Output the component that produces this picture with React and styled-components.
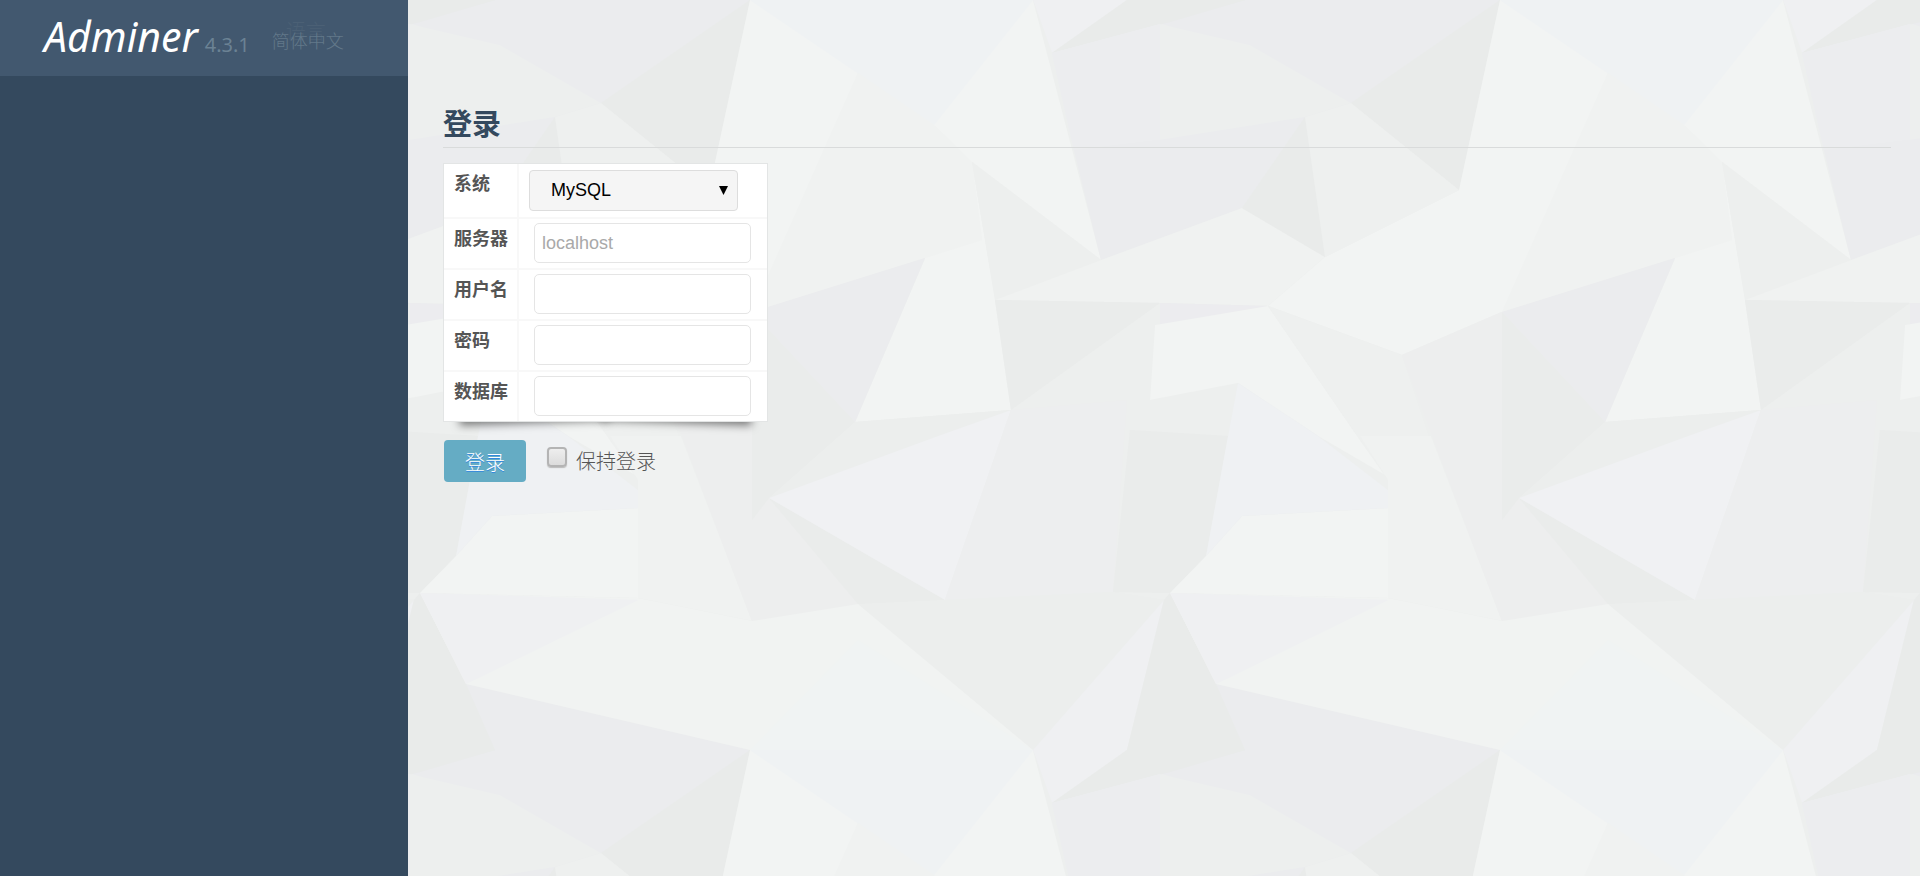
import React from 'react'
import styled, { createGlobalStyle } from 'styled-components'

// one 750x750 tile of the paper background: [fill, points]
const facets = [
  ['#ecedef', '-340,24 -149,103 -195,117 -340,140 -426,150 -448,53'],
  ['#edefee', '-340,24 -250,45 -149,103 -195,117 -340,140'],
  ['#ebecee', '-284,684 0,750 -149,853 -255,800 -350,770 -255,750'],
  ['#e9ebea', '-330,593 -284,684 -255,750 -350,775 -373,750 -336,600'],
  ['#e9ebea', '0,0 -41,190 -149,103'],
  ['#f2f4f3', '0,0 283,0 351,260 222,162 245,300 261,410 105,422 175,258 2,312 -98,355 -232,306 -175,257 -41,190'],
  ['#eff2f3', '0,0 283,0 184,125'],
  ['#f0f2f1', '108,73 184,125 222,162 232,240 175,258 2,312 45,215 75,147'],
  ['#edefee', '222,162 351,260 290,285 245,297'],
  ['#ebecee', '324,150 351,260 492,208 555,117 420,138'],
  ['#e9ebea', '-195,117 -175,257 -258,208'],
  ['#eef0ef', '-195,117 -149,103 -41,190 -175,257'],
  ['#f0f2f1', '351,260 492,208 575,257 518,306 410,303 245,300'],
  ['#eaeceb', '245,300 410,303 261,410'],
  ['#edefee', '410,303 405,360 398,400 420,500 363,592 377,400 261,410'],
  ['#ececef', '410,303 518,306 410,325'],
  ['#f2f4f3', '-232,306 -345,325 -350,400 -262,383 -182,436 -115,475 -140,440'],
  ['#eef0ef', '-232,306 -98,355 -71,436 -112,480 -140,440'],
  ['#f0f2f1', '-140,436 -69,436 2,621 -112,598 -112,480'],
  ['#edeeee', '2,312 -98,355 2,621 108,604 19,498'],
  ['#eaeceb', '2,312 105,422 19,498 2,520'],
  ['#ebecee', '2,312 175,258 105,422'],
  ['#eceeed', '105,422 261,410 188,436 19,498'],
  ['#eaeceb', '19,498 195,600 108,604'],
  ['#eceeed', '108,604 195,600 363,592 414,600 377,750 283,750'],
  ['#f0f1f3', '19,498 188,436 261,410 195,600'],
  ['#edeeef', '261,410 377,400 363,592 195,600'],
  ['#eaeceb', '363,592 380,430 478,436 456,556 420,593'],
  ['#f2f4f3', '-294,556 -258,516 -112,508 -112,598 -330,593'],
  ['#eff1f3', '-262,383 -182,436 -112,490 -112,508 -258,516 -294,556 -272,436'],
  ['#f1f3f2', '-330,593 -112,598 2,621 108,604 283,750 0,750 -284,684'],
  ['#eff0f2', '-330,593 -112,600 -284,684'],
  ['#f0f3f3', '0,750 108,640 283,750'],
  ['#eff0f2', '283,0 377,0 302,53'],
  ['#eff0f2', '283,750 377,750 414,600'],
  ['#e9ebea', '302,53 377,0 400,-20 495,0 420,22'],
  ['#eeeff2', '302,53 410,24 324,150'],
]

const shapes = facets
  .map(([fill, points]) => `<polygon fill="${fill}" points="${points}"/>`)
  .join('')

// facets run over the tile edges, so the group is repeated on every side
const copies = [-750, 0, 750]
  .flatMap((y) => [0, 750].map((x) => `<g transform="translate(${x} ${y})">${shapes}</g>`))
  .join('')

const paper = `data:image/svg+xml,${encodeURIComponent(
  `<svg xmlns="http://www.w3.org/2000/svg" width="750" height="750"><rect width="750" height="750" fill="#edefee"/>${copies}</svg>`
)}`

const GlobalStyle = createGlobalStyle`
* {
  box-sizing: border-box;
}
body {
  margin: 0;
  color: #555;
  font-family: "Noto Sans", "Noto Sans CJK SC", sans-serif;
  font-size: 18px;
}
`

const Page = styled.div`
display: flex;
min-height: 100vh;
background-color: #edefee;
background-image: url("${paper}");
`

const Sidebar = styled.aside`
flex: none;
width: 408px;
background-color: #34495e;
`

const Brand = styled.header`
display: flex;
align-items: baseline;
height: 76px;
padding: 9px 0 0 44px;
background-color: #42586f;
color: #6b8294;
`

const Logo = styled.a`
color: white;
font-size: 41px;
line-height: 54px;
font-style: italic;
text-decoration: none;
`

const Version = styled.span`
margin-left: 7px;
font-size: 20px;
`

const Language = styled.label`
position: relative;
align-self: flex-start;
margin: 18px 0 0 22px;
`

const LanguageCaption = styled.span`
position: absolute;
left: 14px;
top: -8px;
color: #4b6075;
font-family: "Noto Sans CJK SC", sans-serif;
font-size: 20px;
font-weight: 300;
line-height: 24px;
`

const LanguageSelect = styled.select`
display: block;
position: relative;
appearance: none;
border: none;
padding: 0;
background: none;
color: #62788a;
font-family: "Noto Sans CJK SC", sans-serif;
font-size: 18px;
font-weight: 300;
`

const Content = styled.main`
flex: 1;
padding: 104px 29px 40px 35px;
`

const Title = styled.h2`
margin: 0 0 15px;
padding-bottom: 4px;
border-bottom: 1px solid #d9dbdb;
color: #34495e;
font-size: 29px;
line-height: 39px;
`

const Card = styled.div`
position: relative;
z-index: 0;
width: 325px;
margin-bottom: 18px;
&::before, &::after {
  content: "";
  position: absolute;
  z-index: -1;
  bottom: 10px;
  width: 150px;
  height: 20px;
  box-shadow: 0 11px 8px rgba(0, 0, 0, 0.5);
}
&::before {
  left: 16px;
  transform: rotate(-2deg);
}
&::after {
  right: 16px;
  transform: rotate(2deg);
}
`

const FormTable = styled.table`
width: 100%;
border: 1px solid #e3e5e5;
border-spacing: 0;
background-color: white;
th, td {
  border-bottom: 2px solid #f8f8f8;
  vertical-align: top;
}
tr:last-child > * {
  border-bottom: none;
}
`

const HeadCell = styled.th`
width: 75px;
padding: 7px 0 0 10px;
border-right: 2px solid #f8f8f8;
text-align: left;
line-height: 24px;
white-space: nowrap;
`

const Cell = styled.td`
padding: ${(props) => (props.$select ? '6px 10px' : '4px 15px 5px')};
`

const SelectBox = styled.span`
display: block;
position: relative;
width: 209px;
svg {
  position: absolute;
  right: 10px;
  top: 16px;
}
`

const DriverSelect = styled.select`
display: block;
appearance: none;
width: 100%;
height: 41px;
padding: 0 21px 2px;
border: 1px solid #ddd;
border-radius: 4px;
background-color: #f5f5f5;
color: black;
font-family: "Liberation Sans", sans-serif;
font-size: 18px;
`

const TextInput = styled.input`
display: block;
width: 217px;
height: 40px;
padding: 0 7px;
border: 1px solid #e5e5e5;
border-radius: 5px;
background-color: white;
font-family: "Liberation Sans", sans-serif;
font-size: 18px;
&::placeholder {
  color: #a9a9a9;
}
`

const Actions = styled.div`
display: flex;
align-items: center;
padding-left: 1px;
`

const SubmitButton = styled.button`
width: 82px;
height: 42px;
padding: 0;
border: none;
border-radius: 4px;
background-color: #65acc4;
color: white;
font-family: "Noto Sans CJK SC", sans-serif;
font-size: 20px;
font-weight: 300;
text-shadow: 0 1px 0 #3388dd;
cursor: pointer;
`

const Remember = styled.label`
display: flex;
align-items: center;
margin-left: 21px;
font-family: "Noto Sans CJK SC", sans-serif;
font-size: 20px;
font-weight: 300;
line-height: 28px;
`

const CheckBox = styled.input`
appearance: none;
width: 20px;
height: 20px;
margin: 0 9px 8px 0;
border: 2px solid #b4b4b4;
border-radius: 4px;
background: linear-gradient(#eee, #dcdcdc);
box-shadow: 0 1px 1px #bbb;
`

const fields = [
  { id: 'server', label: '服务器', placeholder: 'localhost' },
  { id: 'username', label: '用户名' },
  { id: 'password', label: '密码', type: 'password' },
  { id: 'db', label: '数据库' },
]

function App() {
  return (
    <Page>
      <GlobalStyle />
      <Sidebar>
        <Brand>
          <Logo href="#">Adminer</Logo>
          <Version>4.3.1</Version>
          <Language>
            <LanguageCaption>语言</LanguageCaption>
            <LanguageSelect>
              <option>简体中文</option>
            </LanguageSelect>
          </Language>
        </Brand>
      </Sidebar>

      <Content>
        <Title>登录</Title>
        <form>
          <Card>
            <FormTable>
              <tbody>
                <tr>
                  <HeadCell><label htmlFor="driver">系统</label></HeadCell>
                  <Cell $select>
                    <SelectBox>
                      <DriverSelect id="driver">
                        <option>MySQL</option>
                      </DriverSelect>
                      <svg width="9" height="9" viewBox="0 0 9 9">
                        <path d="M0 0h9L4.5 9z" />
                      </svg>
                    </SelectBox>
                  </Cell>
                </tr>
                {fields.map((field) => (
                  <tr key={field.id}>
                    <HeadCell><label htmlFor={field.id}>{field.label}</label></HeadCell>
                    <Cell>
                      <TextInput id={field.id} type={field.type || 'text'} placeholder={field.placeholder} />
                    </Cell>
                  </tr>
                ))}
              </tbody>
            </FormTable>
          </Card>
          <Actions>
            <SubmitButton type="button">登录</SubmitButton>
            <Remember>
              <CheckBox type="checkbox" />
              保持登录
            </Remember>
          </Actions>
        </form>
      </Content>
    </Page>
  );
}

export default App;
